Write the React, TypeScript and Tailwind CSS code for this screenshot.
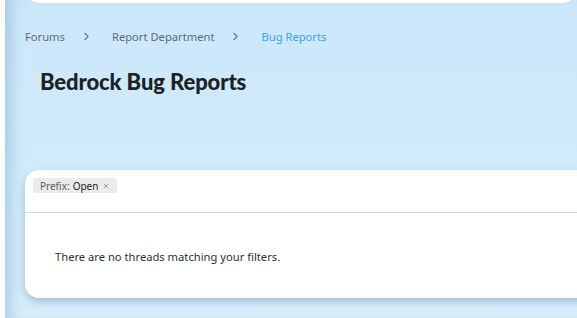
import { ChevronRight, X } from 'lucide-react';

const crumbs = ['Forums', 'Report Department'];

export default function App() {
  return (
    <div className="flex h-[318px] w-[577px] overflow-hidden bg-white pl-[5px] font-['Noto_Sans',sans-serif]">
      <div className="flex flex-1 flex-col bg-gradient-to-b from-[#cbe7fa] to-[#d8eefb] pl-[20px] shadow-[inset_14px_0_14px_-8px_rgba(120,170,205,0.45)]">
        {/* header card bottom edge */}
        <div className="-mt-[17px] h-[20px] shrink-0 rounded-b-[14px] bg-white" />

        <nav className="mt-[25px] flex h-[18px] items-center text-[11.2px] text-[#5f6b76]">
          {crumbs.map((c) => (
            <span key={c} className="flex items-center">
              <span>{c}</span>
              <ChevronRight className="ml-[15px] mr-[19px] h-[13px] w-[13px] text-[#6b7580]" strokeWidth={2} />
            </span>
          ))}
          <span className="text-[#3d9ff0]">Bug Reports</span>
        </nav>

        <h1 className="ml-[15px] mt-[22px] text-[22px] font-black leading-[28px] tracking-[-0.1px] text-[#1c2126] font-['Lato',sans-serif]">
          Bedrock Bug Reports
        </h1>

        <div className="mt-[74px] -mr-[20px] flex h-[128px] flex-col rounded-l-[14px] bg-white shadow-[0_4px_8px_rgba(90,140,180,0.45)]">
          <div className="flex h-[43px] items-start border-b border-[#d2dde7] px-[8px] pt-[8px]">
            <span className="flex h-[15px] items-center rounded-[2px] bg-[#ebebeb] px-[7px] text-[10px] leading-none">
              <span className="text-[#555c63]">Prefix:</span>
              <span className="ml-[3px] text-[#1f2328]">Open</span>
              <X className="ml-[4px] h-[8px] w-[8px] text-[#8a9096]" strokeWidth={2.5} />
            </span>
          </div>
          <p className="px-[30px] pt-[36px] text-[11.2px] text-[#2c3136]">
            There are no threads matching your filters.
          </p>
        </div>
      </div>
    </div>
  );
}
